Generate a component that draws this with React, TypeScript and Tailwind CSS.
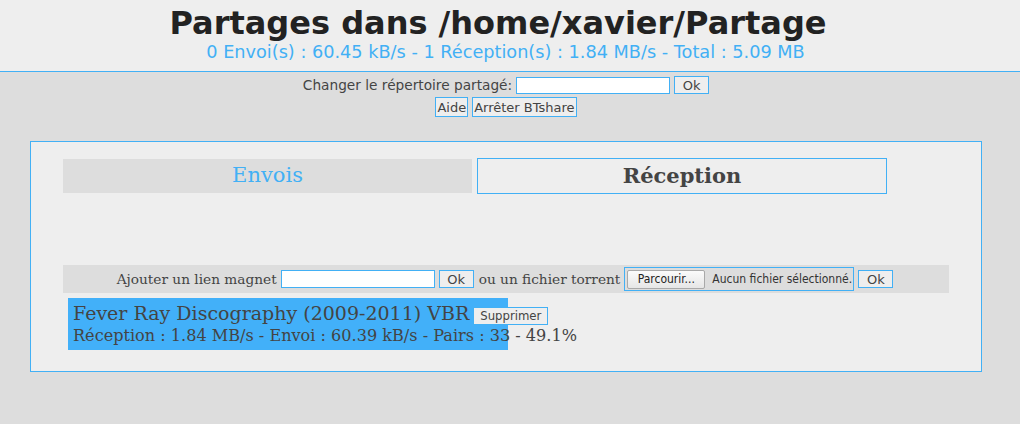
export default function App() {
  const progress = 49.1;
  return (
    <div className="min-h-[424px] bg-[#dddddd] font-['DejaVu_Sans',sans-serif] text-[#444444]">
      <header className="border-b border-[#42b0f5] bg-[#eeeeee] pt-[4px] pb-[8px] text-center">
        <h1 className="pr-[24px] text-[32px] font-bold leading-[38px] text-[#222222]">Partages dans /home/xavier/Partage</h1>
        <div className="pr-[9px] text-[17.7px] leading-[21px] text-[#42b0f5]">
          0 Envoi(s) : 60.45 kB/s - 1 Réception(s) : 1.84 MB/s - Total : 5.09 MB
        </div>
      </header>

      <form className="mt-[4px] flex flex-col items-center gap-[3px] pr-[8px]" onSubmit={(e) => e.preventDefault()}>
        <div className="flex items-center gap-[4px]">
          <label className="text-[13.7px] leading-[17px]">Changer le répertoire partagé:</label>
          <input className="h-[17px] w-[154px] border border-[#42b0f5] bg-white outline-none" />
          <Btn className="h-[17px] w-[35px] px-[2px]">Ok</Btn>
        </div>
        <div className="flex items-center gap-[4px]">
          <Btn className="h-[20px] px-[1px] text-[12.7px]">Aide</Btn>
          <Btn className="h-[20px] px-[1px] text-[12.7px]">Arrêter BTshare</Btn>
        </div>
      </form>

      <section className="ml-[30px] mt-[24px] h-[231px] w-[952px] border border-[#42b0f5] bg-[#eeeeee] px-[32px] pt-[16px] font-['DejaVu_Serif',serif]">
        <div className="flex items-start gap-[5px]">
          <button className="mt-[1px] h-[34px] w-[409px] bg-[#dddddd] text-[21px] text-[#42b0f5]">Envois</button>
          <button className="h-[36px] w-[410px] border border-[#42b0f5] text-[21px] font-bold text-[#444444]">Réception</button>
        </div>

        <div className="mt-[71px] flex h-[28px] items-center justify-center gap-[4px] bg-[#dddddd] pr-[2px] text-[13.7px]">
          <span>Ajouter un lien magnet</span>
          <input className="h-[18px] w-[154px] border border-[#42b0f5] bg-white outline-none" />
          <Btn className="w-[35px] px-[2px]">Ok</Btn>
          <span className="ml-[1px]">ou un fichier torrent</span>
          <div className="flex h-[24px] w-[230px] items-center gap-[7px] border border-[#42b0f5] pl-[2px] font-['DejaVu_Sans_Condensed',sans-serif] text-[12px]">
            <span className="flex h-[19px] w-[78px] items-center justify-center rounded-[2px] border border-[#a9a9a9] bg-[linear-gradient(#fbfbfb,#e6e6e6)] text-[#222222]">
              Parcourir...
            </span>
            <span className="whitespace-nowrap text-[#333333]">Aucun fichier sélectionné.</span>
          </div>
          <Btn className="w-[35px] px-[2px]">Ok</Btn>
        </div>

        <div
          className="mt-[5px] ml-[5px] w-[896px] pl-[5px] pt-[3px] pb-[5px]"
          style={{ background: `linear-gradient(to right, #42b0f9 ${progress}%, transparent ${progress}%)` }}
        >
          <div className="flex items-center gap-[4px]">
            <span className="text-[19px] leading-[25px]">Fever Ray Discography (2009-2011) VBR</span>
            <Btn className="mt-[4px] h-[18px] px-[6px] font-['DejaVu_Sans_Condensed',sans-serif] text-[12px]">Supprimer</Btn>
          </div>
          <div className="text-[16.1px] leading-[19px]">
            Réception : 1.84 MB/s - Envoi : 60.39 kB/s - Pairs : 33 - {progress}%
          </div>
        </div>
      </section>
    </div>
  );
}

function Btn({ children, className = "" }: { children: React.ReactNode; className?: string }) {
  return (
    <button
      type="button"
      className={`flex h-[18px] items-center justify-center border border-[#42b0f5] bg-[#eeeeee] font-['DejaVu_Sans',sans-serif] text-[13px] leading-none text-[#444444] ${className}`}
    >
      {children}
    </button>
  );
}
